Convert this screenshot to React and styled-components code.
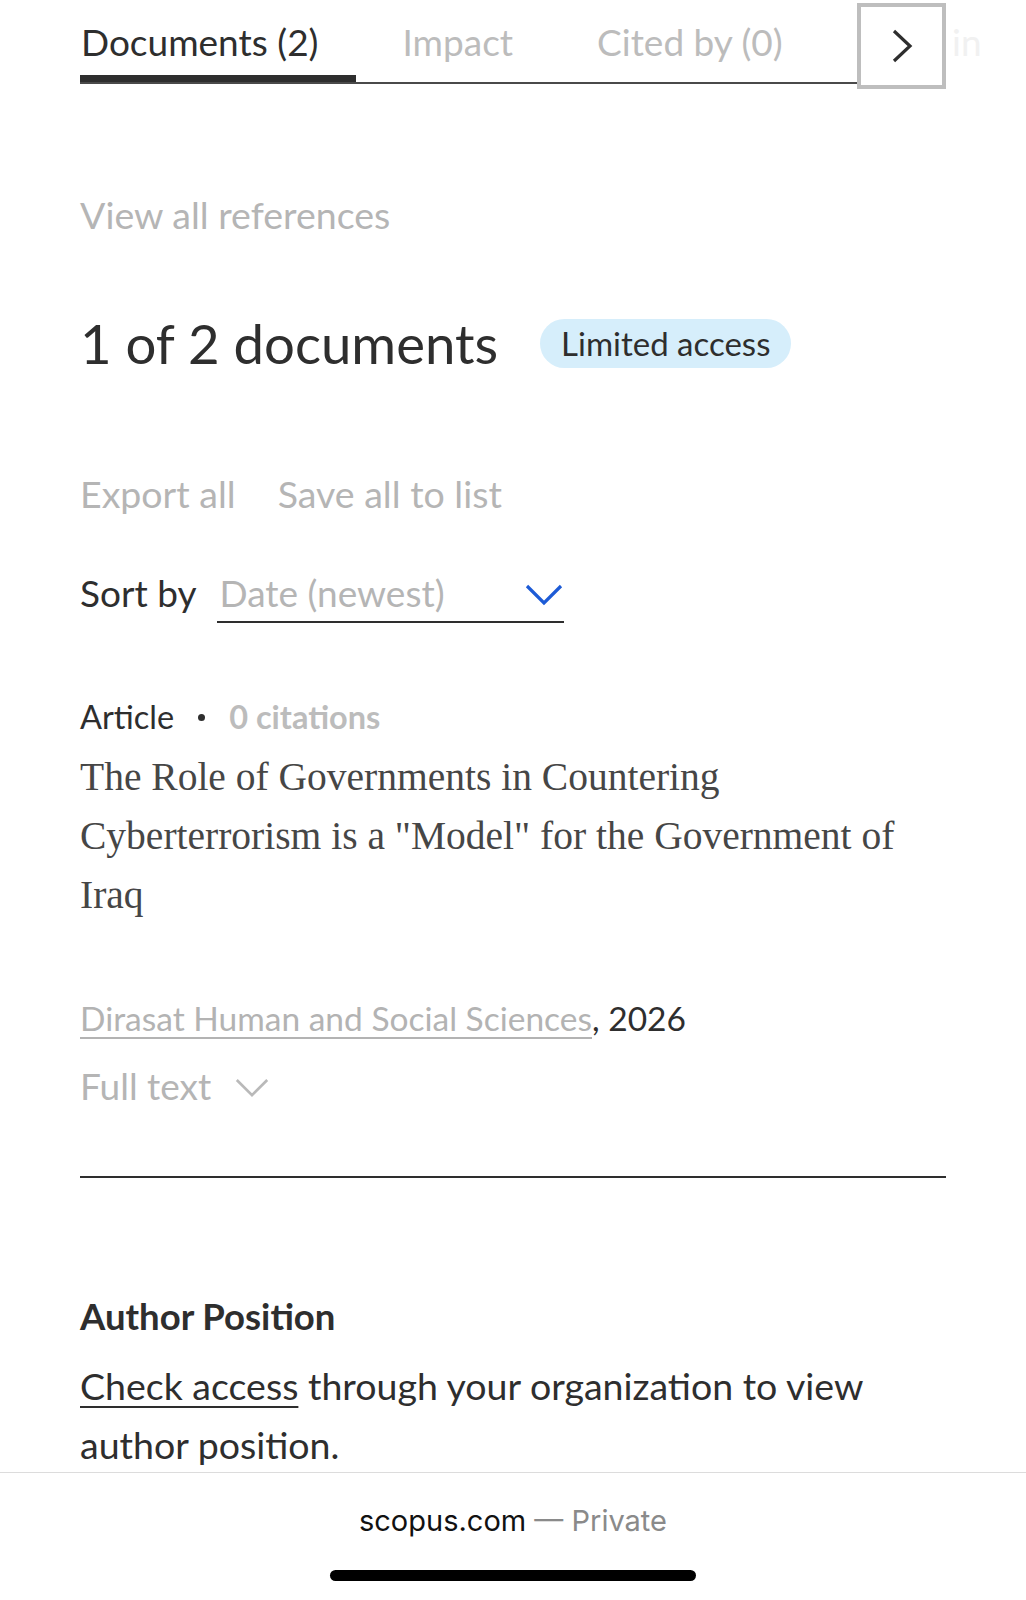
import React from 'react';
import styled, { createGlobalStyle } from 'styled-components';

const GlobalStyle = createGlobalStyle`
  html, body {
    margin: 0;
    padding: 0;
    background: #fff;
  }
  body {
    font-family: Lato, 'Open Sans', sans-serif;
    color: #2e2e2e;
  }
`;

const tabs = [
  { label: 'Documents (2)', active: true },
  { label: 'Impact' },
  { label: 'Cited by (0)' },
];

const Chevron = ({ color = '#2e2e2e', width = 38, height = 24, stroke = 3 }) => (
  <svg width={width} height={height} viewBox="0 0 38 24" fill="none">
    <path d="M2 3 L19 20 L36 3" stroke={color} strokeWidth={stroke} />
  </svg>
);

const App = () => {
  return (
    <Page>
      <GlobalStyle />
      <Content>
        <TabBar>
          <TabList>
            {tabs.map((t) => (
              <Tab key={t.label} active={t.active}>
                {t.label}
              </Tab>
            ))}
          </TabList>
          <NextButton>
            <svg width="26" height="36" viewBox="0 0 26 36" fill="none">
              <path d="M5 3 L21 18 L5 33" stroke="#2e2e2e" strokeWidth="3.2" />
            </svg>
          </NextButton>
          <GhostTab>in</GhostTab>
        </TabBar>

        <MutedLink>View all references</MutedLink>

        <HeadingRow>
          <Heading>1 of 2 documents</Heading>
          <Badge>Limited access</Badge>
        </HeadingRow>

        <Actions>
          <MutedLink as="span">Export all</MutedLink>
          <MutedLink as="span">Save all to list</MutedLink>
        </Actions>

        <SortRow>
          <SortLabel>Sort by</SortLabel>
          <Select>
            <span>Date (newest)</span>
            <Chevron color="#1d5bd6" stroke={3.2} />
          </Select>
        </SortRow>

        <Meta>
          <span>Article</span>
          <Dot />
          <Citations>0 citations</Citations>
        </Meta>
        <Title>
          The Role of Governments in Countering Cyberterrorism is a "Model" for the Government of Iraq
        </Title>

        <Source>
          <SourceLink>Dirasat Human and Social Sciences</SourceLink>, 2026
        </Source>

        <FullText>
          Full text
          <Chevron color="#b9b9b9" width={34} height={22} stroke={3} />
        </FullText>

        <Divider />

        <SectionTitle>Author Position</SectionTitle>
        <Paragraph>
          <DarkLink>Check access</DarkLink> through your organization to view author position.
        </Paragraph>
      </Content>

      <BrowserBar>
        <Address>
          scopus.com <Private>— Private</Private>
        </Address>
        <HomeIndicator />
      </BrowserBar>
    </Page>
  );
};

const Page = styled.div`
  width: 1026px;
  height: 1600px;
  display: flex;
  flex-direction: column;
  overflow: hidden;
`;

const Content = styled.div`
  height: 1472px;
  padding: 0 80px 0 80px;
  box-sizing: border-box;
  overflow: hidden;
  display: flex;
  flex-direction: column;
  align-items: flex-start;
`;

const TabBar = styled.div`
  display: flex;
  align-items: flex-start;
  width: 100%;
  height: 91px;
`;

const TabList = styled.div`
  flex: 1;
  display: flex;
  align-items: flex-end;
  height: 84px;
  box-sizing: border-box;
  border-bottom: 2px solid #4a4a4a;
  overflow: hidden;
`;

const Tab = styled.div`
  flex: none;
  white-space: nowrap;
  font-size: 37px;
  line-height: 44px;
  padding: 20px 37px 0 1px;
  margin-right: 46px;
  margin-bottom: -2px;
  height: 84px;
  box-sizing: border-box;
  color: ${(p) => (p.active ? '#2e2e2e' : '#bcbcbc')};
  border-bottom: 9px solid ${(p) => (p.active ? '#2e2e2e' : 'transparent')};
`;

const NextButton = styled.div`
  flex: none;
  width: 89px;
  height: 86px;
  margin-top: 3px;
  box-sizing: border-box;
  border: 4px solid #bebebe;
  background: #fff;
  display: flex;
  align-items: center;
  justify-content: center;
`;

const GhostTab = styled.span`
  width: 0;
  overflow: visible;
  white-space: nowrap;
  text-indent: 6px;
  font-size: 37px;
  line-height: 44px;
  padding-top: 20px;
  color: #f1f1f1;
`;

const MutedLink = styled.div`
  font-size: 37.5px;
  line-height: 41px;
  color: #b5b5b5;
  white-space: nowrap;
  margin-top: 105px;
`;

const HeadingRow = styled.div`
  display: flex;
  align-items: center;
  gap: 42px;
  margin-top: 77px;
`;

const Heading = styled.h1`
  margin: 0;
  font-size: 54.5px;
  font-weight: 400;
  line-height: 62px;
  color: #2e2e2e;
`;

const Badge = styled.span`
  height: 49px;
  padding: 0 21px;
  border-radius: 25px;
  background: #d6eefb;
  font-size: 33px;
  line-height: 49px;
  color: #2e2e2e;
`;

const Actions = styled.div`
  display: flex;
  gap: 42px;
  margin-top: 99px;
  ${MutedLink} {
    margin-top: 0;
  }
`;

const SortRow = styled.div`
  display: flex;
  align-items: flex-start;
  gap: 21px;
  margin-top: 58px;
`;

const SortLabel = styled.span`
  font-size: 37px;
  line-height: 41px;
  color: #2e2e2e;
`;

const Select = styled.div`
  width: 347px;
  display: flex;
  justify-content: space-between;
  align-items: center;
  padding: 0 1px 8px 2px;
  box-sizing: border-box;
  border-bottom: 2px solid #2e2e2e;
  font-size: 37px;
  line-height: 41px;
  color: #b5b5b5;
  svg {
    margin-top: 4px;
  }
`;

const Meta = styled.div`
  display: flex;
  align-items: center;
  gap: 24px;
  margin-top: 76px;
  font-size: 32.5px;
  line-height: 36px;
  color: #2e2e2e;
`;

const Dot = styled.span`
  width: 7px;
  height: 7px;
  border-radius: 50%;
  background: #2e2e2e;
`;

const Citations = styled.span`
  font-weight: 700;
  color: #bcbcbc;
`;

const Title = styled.h2`
  margin: 13px 0 0;
  font-family: 'Liberation Serif', 'DejaVu Serif', serif;
  font-weight: 400;
  font-size: 39.5px;
  line-height: 59px;
  color: #464646;
  width: 100%;
`;

const Source = styled.div`
  margin-top: 75px;
  font-size: 33.5px;
  line-height: 36px;
  color: #2e2e2e;
`;

const SourceLink = styled.span`
  color: #b3b3b3;
  text-decoration: underline;
  text-decoration-thickness: 2px;
  text-underline-offset: 6px;
`;

const FullText = styled.div`
  display: flex;
  align-items: center;
  gap: 24px;
  margin-top: 29px;
  font-size: 37px;
  line-height: 41px;
  color: #b5b5b5;
  svg {
    margin-top: 4px;
  }
`;

const Divider = styled.hr`
  width: 100%;
  margin: 70px 0 0;
  border: none;
  border-top: 2px solid #2e2e2e;
`;

const SectionTitle = styled.h3`
  margin: 119px 0 0;
  font-size: 36.5px;
  font-weight: 700;
  line-height: 38px;
  color: #2e2e2e;
`;

const Paragraph = styled.p`
  margin: 21px 0 0;
  font-size: 37.5px;
  line-height: 59px;
  color: #2e2e2e;
`;

const DarkLink = styled.span`
  text-decoration: underline;
  text-decoration-thickness: 2px;
  text-underline-offset: 6px;
`;

const BrowserBar = styled.div`
  flex: 1;
  border-top: 1px solid #dcdcdc;
  display: flex;
  flex-direction: column;
  align-items: center;
  padding-top: 31px;
  box-sizing: border-box;
`;

const Address = styled.div`
  font-family: Inter, 'Liberation Sans', sans-serif;
  font-size: 29px;
  line-height: 34px;
  color: #111;
`;

const Private = styled.span`
  color: #8a8a8a;
`;

const HomeIndicator = styled.div`
  width: 366px;
  height: 11px;
  border-radius: 6px;
  background: #000;
  margin-top: 32px;
`;

export default App;
